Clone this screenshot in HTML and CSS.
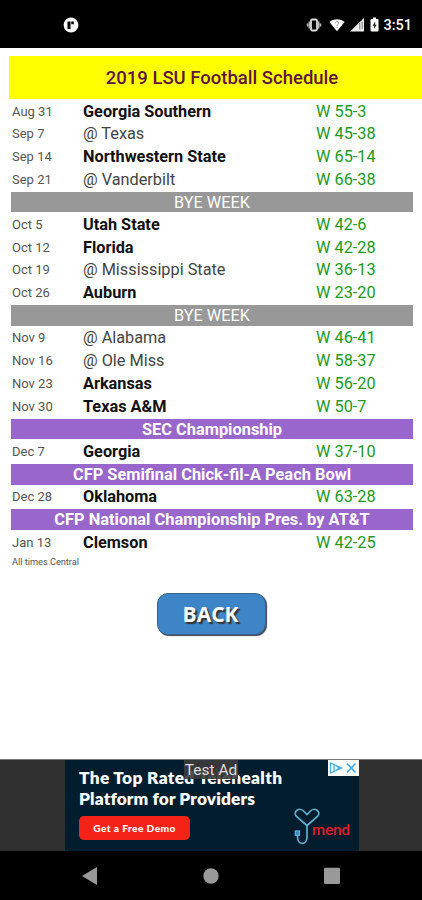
FILE: index.html
```html
<!DOCTYPE html>
<html lang="en">
<head>
  <meta charset="utf-8">
  <title>2019 LSU Football Schedule</title>
  <link rel="stylesheet" href="styles.css">
</head>
<body>
  <header class="status">
    <svg class="app-icon" viewBox="0 0 16 16" width="16" height="16">
      <circle cx="8" cy="8" r="7.4" fill="#fff"/>
      <path d="M4.500 4.500h3v7.500h-3zM8.300 4.500h2.500v2.800H8.300z" fill="#000"/>
    </svg>
    <div class="status-right">
      <svg viewBox="0 0 16 14" width="16" height="14">
        <rect x="5" y="1.5" width="6" height="11" rx="1.4" fill="none" stroke="#ddd" stroke-width="1.8"/>
        <path d="M3.300 3.500v7M12.700 3.500v7M1.500 5.500v3M14.500 5.500v3" stroke="#bbb" stroke-width="1.500"/>
      </svg>
      <svg class="wifi" viewBox="0 0 16 14" width="16" height="14">
        <path d="M8 13.3L.4 4C4.6.2 11.4.2 15.6 4z" fill="#fff"/>
        <path d="M6.3 5.2c.2-2 3.4-2 3.4 0 0 1.2-1.7 1.2-1.7 2.5M8 8.8v1.4" fill="none" stroke="#888" stroke-width="1"/>
      </svg>
      <svg class="signal" viewBox="0 0 14 14" width="14" height="14">
        <path d="M0 13.5L14 0v13.5z" fill="#eee"/>
        <path d="M9.800 5v6.500M12.200 4v7" stroke="#777" stroke-width="1"/>
      </svg>
      <svg class="battery" viewBox="0 0 9 15" width="9" height="15">
        <path d="M1.500 2H3V.5h3V2h1.500q1 0 1 1v10.500q0 1-1 1h-6q-1 0-1-1V3q0-1 1-1z" fill="#fff"/>
        <path d="M5.200 4.500L2.500 8.700h1.600v3.300l2.600-4.300H5.200z" fill="#222"/>
      </svg>
      <span class="clock">3:51</span>
    </div>
  </header>

  <main>
    <h1>2019 LSU Football Schedule</h1>

    <div class="schedule">
      <div class="game home"><span class="date">Aug 31</span><span class="team">Georgia Southern</span><span class="score">W 55-3</span></div>
      <div class="game"><span class="date">Sep 7</span><span class="team">@ Texas</span><span class="score">W 45-38</span></div>
      <div class="game home"><span class="date">Sep 14</span><span class="team">Northwestern State</span><span class="score">W 65-14</span></div>
      <div class="game"><span class="date">Sep 21</span><span class="team">@ Vanderbilt</span><span class="score">W 66-38</span></div>
      <div class="bar">BYE WEEK</div>
      <div class="game home"><span class="date">Oct 5</span><span class="team">Utah State</span><span class="score">W 42-6</span></div>
      <div class="game home"><span class="date">Oct 12</span><span class="team">Florida</span><span class="score">W 42-28</span></div>
      <div class="game"><span class="date">Oct 19</span><span class="team">@ Mississippi State</span><span class="score">W 36-13</span></div>
      <div class="game home"><span class="date">Oct 26</span><span class="team">Auburn</span><span class="score">W 23-20</span></div>
      <div class="bar">BYE WEEK</div>
      <div class="game"><span class="date">Nov 9</span><span class="team">@ Alabama</span><span class="score">W 46-41</span></div>
      <div class="game"><span class="date">Nov 16</span><span class="team">@ Ole Miss</span><span class="score">W 58-37</span></div>
      <div class="game home"><span class="date">Nov 23</span><span class="team">Arkansas</span><span class="score">W 56-20</span></div>
      <div class="game home"><span class="date">Nov 30</span><span class="team">Texas A&amp;M</span><span class="score">W 50-7</span></div>
      <div class="bar post">SEC Championship</div>
      <div class="game home"><span class="date">Dec 7</span><span class="team">Georgia</span><span class="score">W 37-10</span></div>
      <div class="bar post">CFP Semifinal Chick-fil-A Peach Bowl</div>
      <div class="game home"><span class="date">Dec 28</span><span class="team">Oklahoma</span><span class="score">W 63-28</span></div>
      <div class="bar post">CFP National Championship Pres. by AT&amp;T</div>
      <div class="game home"><span class="date">Jan 13</span><span class="team">Clemson</span><span class="score">W 42-25</span></div>
    </div>
    <p class="note">All times Central</p>

    <button class="back" type="button">BACK</button>
  </main>

  <section class="ad">
    <div class="banner">
      <div class="copy">
        <div class="headline">The Top Rated Telehealth</div>
        <div class="headline second">Platform for Providers</div>
        <span class="demo">Get a Free Demo</span>
      </div>
      <div class="mend">
        <svg viewBox="0 0 28 38" width="28" height="38">
          <path d="M14 17.500L3.500 8.500C-1 3.500 7-1.500 11 3.500l3 3 3-3c4-5 12 0 7.500 5L14 17.500V29c0 8.500-9.500 8.500-9.500 0v-2" fill="none" stroke="#62aeca" stroke-width="1.700"/>
          <rect x="2.300" y="23" width="4.200" height="4.200" fill="#3c87ad" stroke="#58b9e6" stroke-width="1.200"/>
        </svg>
        <span>mend</span>
      </div>
      <div class="test">Test Ad</div>
      <div class="choices">
        <svg viewBox="0 0 31 16" width="31" height="16">
          <path d="M2.500 3v10l11-5zM6 5.500v5M8 5.500L11 8l-3 2.500" fill="none" stroke="#42aee0" stroke-width="1.300"/>
          <path d="M19 3.500l8.500 9M27.500 3.500l-8.500 9" stroke="#42aee0" stroke-width="1.800"/>
        </svg>
      </div>
    </div>
  </section>

  <nav class="navbar">
    <svg viewBox="0 0 18 20" width="18" height="20"><path d="M1 10L16 1v18z" fill="#999"/></svg>
    <svg viewBox="0 0 18 20" width="18" height="20"><circle cx="9" cy="10" r="7.700" fill="#999"/></svg>
    <svg viewBox="0 0 18 20" width="18" height="20"><rect x="1" y="1.800" width="16" height="16.200" rx="1" fill="#999"/></svg>
  </nav>
</body>
</html>
```
FILE: styles.css
```css
* {
  box-sizing: border-box;
}
body {
  margin: 0;
  width: 422px;
  height: 900px;
  display: flex;
  flex-direction: column;
  overflow: hidden;
  background: #fff;
  font-family: Roboto, sans-serif;
}
.status {
  height: 48px;
  background: #000;
  display: flex;
  align-items: center;
  justify-content: space-between;
  padding: 1px 10px 0 63px;
}
.status-right {
  display: flex;
  align-items: center;
}
.wifi {
  margin-left: 7px;
}
.signal {
  margin-left: 5px;
}
.battery {
  margin-left: 6px;
}
.clock {
  color: #fff;
  font-size: 14.5px;
  font-weight: 500;
  margin-left: 4px;
  line-height: 16px;
  padding-top: 2px;
}
main {
  height: 711px;
  padding-top: 8px;
}
h1 {
  margin: 0 0 0 9px;
  height: 43px;
  padding-left: 13px;
  background: #ff0;
  color: #5c1540;
  font-size: 18.5px;
  font-weight: 500;
  line-height: 44px;
  text-align: center;
}
.schedule {
  display: grid;
  grid-auto-rows: 22.7px;
  margin: 1px 9px 0 11px;
}
.game {
  display: grid;
  grid-template-columns: 72px 233px 1fr;
  align-items: center;
  line-height: 22px;
  padding-top: 0.5px;
}
.date {
  padding-left: 1px;
  color: #555;
  font-size: 13px;
}
.team {
  color: #444;
  font-size: 16.3px;
}
.home .team {
  color: #111;
  font-weight: 700;
}
.score {
  color: #219a21;
  font-size: 16.3px;
}
.bar {
  height: 20.5px;
  margin-top: 1px;
  background: #989898;
  color: #fff;
  font-size: 16.3px;
  line-height: 21px;
  text-align: center;
}
.post {
  background: #9966cc;
  font-size: 16.4px;
  font-weight: 700;
}
.note {
  margin: 0 0 0 12px;
  color: #555;
  font-size: 9.2px;
  line-height: 15px;
}
.back {
  display: block;
  width: 109px;
  height: 42px;
  margin: 24px 0 0 157px;
  padding: 0 2px 0 0;
  border: 1px solid #39618c;
  border-radius: 11px;
  background: #3d85c6;
  box-shadow: 1px 1px 1px 0 #404050;
  color: #fff;
  font: bold 21px/38px "Open Sans", sans-serif;
  text-shadow: 2px 2px 1px #333;
}
.ad {
  height: 92px;
  background: #303030;
  border-top: 1px solid #777;
}
.banner {
  position: relative;
  width: 294px;
  height: 91px;
  margin-left: 65px;
  background: #021d2d;
  display: flex;
  justify-content: space-between;
}
.copy {
  width: 215px;
  padding: 7px 0 0 14px;
  color: #fff;
  white-space: nowrap;
}
.headline {
  font: 800 17.3px/21px Lato, sans-serif;
  letter-spacing: 0.33px;
}
.second {
  letter-spacing: 0.12px;
}
.demo {
  display: block;
  width: 111px;
  height: 24px;
  margin-top: 7px;
  border-radius: 5px;
  background: #f52218;
  font: 900 10.2px/24px Lato, sans-serif;
  letter-spacing: 0.4px;
  text-align: center;
}
.mend {
  display: flex;
  padding: 48px 9px 0 0;
  color: #e01d24;
  font: 500 15px/45px Roboto, sans-serif;
}
.mend span {
  margin-left: -9px;
}
.test {
  position: absolute;
  left: 119px;
  top: 0;
  width: 54px;
  height: 19px;
  background: rgba(60, 60, 60, 0.9);
  color: #ddd;
  font-size: 15.5px;
  line-height: 21px;
  text-align: center;
  white-space: nowrap;
}
.choices {
  position: absolute;
  right: 0;
  top: 0;
  height: 16px;
  background: #fff;
  line-height: 0;
}
.navbar {
  height: 49px;
  background: #000;
  display: flex;
  justify-content: space-between;
  align-items: center;
  padding: 0 81px;
}
```
